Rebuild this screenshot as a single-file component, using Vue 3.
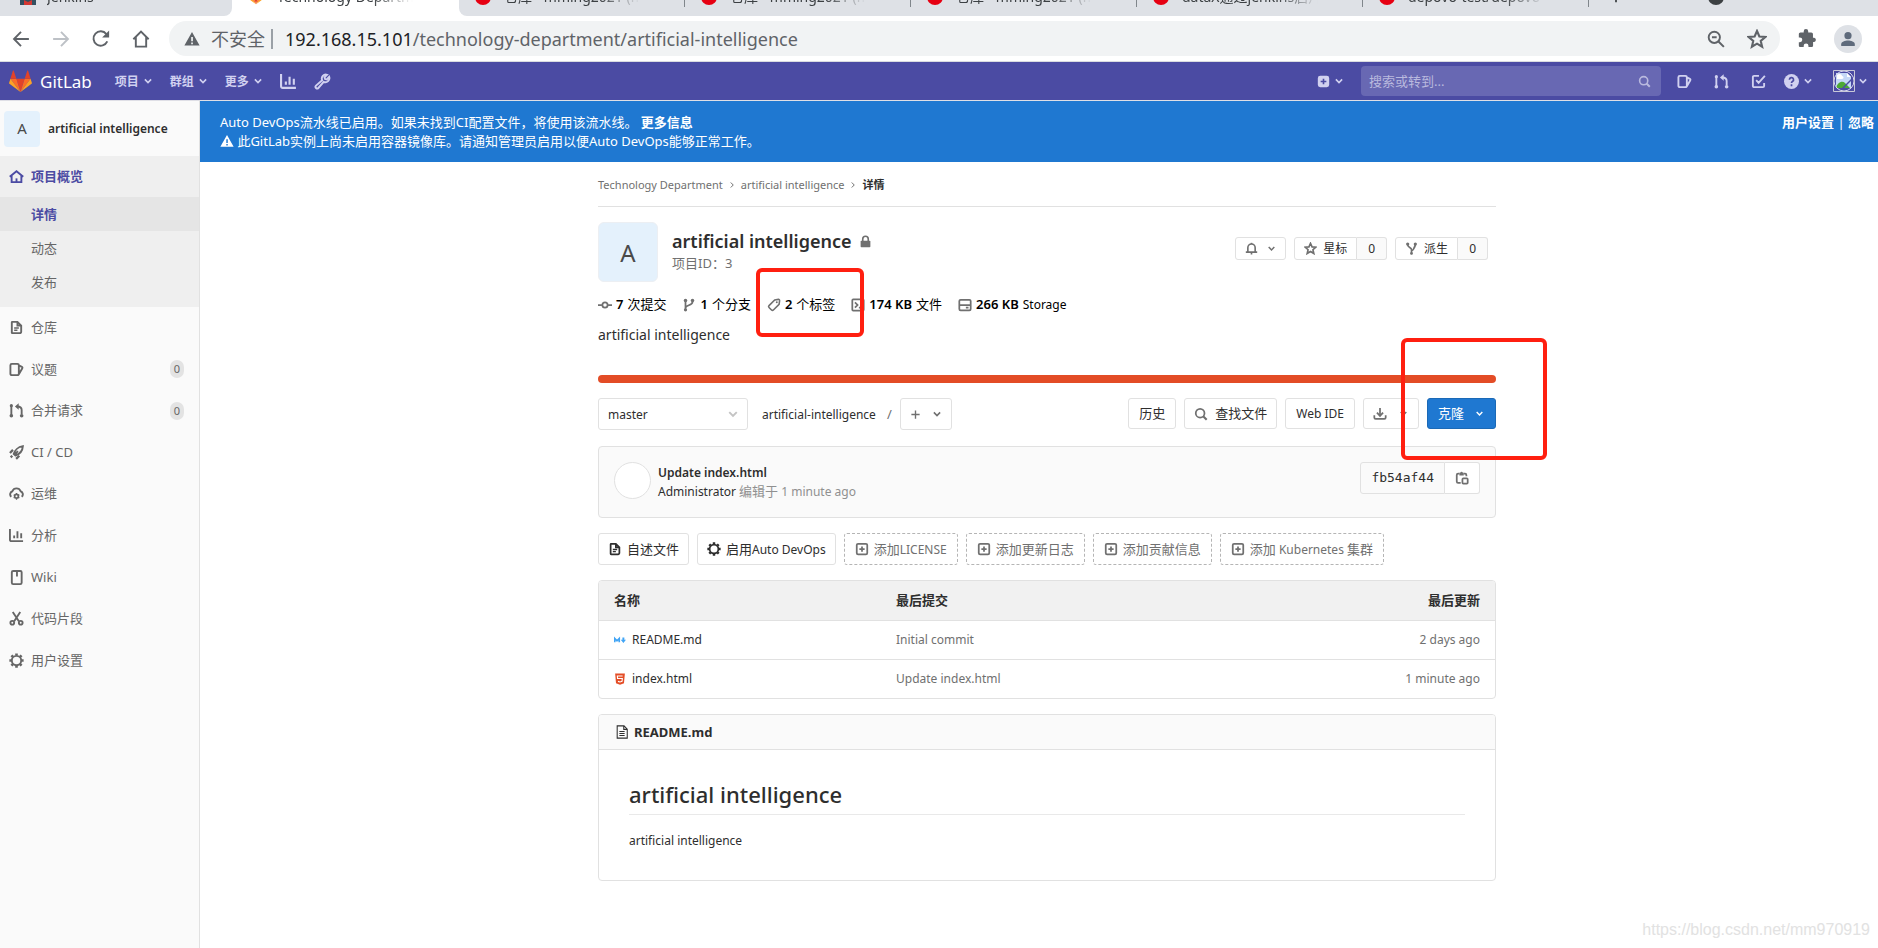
<script setup>
import { ref, h } from 'vue'

const glyphs = {
  back: '<path d="M15 8H2M8 1.6 1.8 8 8 14.4"/>',
  forward: '<path d="M1 8h13M8 1.6 14.2 8 8 14.4"/>',
  reload: '<path d="M13.6 10.2A6.4 6.4 0 1 1 12.8 3.6"/><path d="M15.2.4v6.2H9z" fill="currentColor" stroke="none"/>',
  house: '<path d="M1.2 8.2 8 1.5l6.800 6.700M3.400 6.500V14.800h9.200V6.500"/>',
  warning: '<path fill="currentColor" stroke="none" fill-rule="evenodd" d="M8 1 .4 14.600h15.200zM7.200 6h1.700v4.200H7.200zm0 5.500h1.700v1.700H7.200z"/>',
  zoomOut: '<circle cx="6.500" cy="6.500" r="5"/><path d="M10.200 10.200 15 15M4.400 6.500h4.200" stroke-width="1.800"/>',
  starOutline: '<path d="M8 1.600 9.900 6l4.700.4-3.600 3.100 1.100 4.700L8 11.700l-4.100 2.500L5 9.500 1.400 6.400 6.100 6z"/>',
  puzzle: '<path fill="currentColor" stroke="none" d="M13.600 7.300h-1V4.400c0-.8-.6-1.400-1.400-1.400H8.600V2a1.900 1.900 0 0 0-3.800 0v1H2.100C1.300 3 .7 3.600.7 4.400v2.700h.9a2 2 0 0 1 0 4H.7v2.700c0 .8.6 1.400 1.400 1.400h2.700v-1a2 2 0 0 1 4 0v1h2.500c.8 0 1.400-.6 1.400-1.400V11h.9a1.900 1.900 0 0 0 0-3.700z"/>',
  person: '<circle cx="8" cy="4.700" r="3.600" fill="currentColor" stroke="none"/><path fill="currentColor" stroke="none" d="M1.200 15v-1.800C1.200 10.700 5 9.500 8 9.500s6.800 1.200 6.800 3.700V15z"/>',
  chevron: '<path d="m3 5.500 5 5 5-5" stroke-width="2.600"/>',
  right: '<path d="m5.500 3 5 5-5 5" stroke-width="2"/>',
  chart: '<path d="M1 1v11.500A1.500 1.500 0 0 0 2.500 14H15M5.500 8v3M9 3.500V11M13 5.500V11"/>',
  wrench: '<path d="M14.300 3.600a3.800 3.800 0 0 1-5.200 4.700l-5 5.800a1.500 1.500 0 0 1-2.200-2.200l5.800-5A3.800 3.800 0 0 1 12.300 1.700L9.900 4.100l.5 1.600 1.600.4z" stroke-width="1.800"/>',
  plusSquare: '<path fill="currentColor" stroke="none" fill-rule="evenodd" d="M4 1h8a3 3 0 0 1 3 3v8a3 3 0 0 1-3 3H4a3 3 0 0 1-3-3V4a3 3 0 0 1 3-3zm3 3.500V7H4.500v2H7v2.500h2V9h2.500V7H9V4.500z"/>',
  plusBox: '<rect x="2" y="2" width="12" height="12" rx="1.500"/><path d="M8 5v6M5 8h6"/>',
  plus: '<path d="M8 2v12M2 8h12"/>',
  search: '<circle cx="7" cy="7" r="5"/><path d="m10.500 10.500 4 4" stroke-width="2.400"/>',
  issues: '<path d="M3 2h6a1.500 1.500 0 0 1 1.500 1.500v9A1.500 1.500 0 0 1 9 14H3a1.500 1.500 0 0 1-1.500-1.500v-9A1.500 1.500 0 0 1 3 2zM10.500 3.600l3.200 1.600c.6.300.8.800.5 1.400L10.500 13"/>',
  merge: '<path d="M2.500 4v9M13.500 12V7.500c0-2.500-1.500-3.800-4.500-3.800"/><path fill="currentColor" stroke="none" d="M10.300.3v6.800L6.300 3.700z"/><circle cx="2.500" cy="2.800" r="1.700" fill="currentColor" stroke="none"/><circle cx="2.500" cy="13.500" r="1.900" fill="currentColor" stroke="none"/><circle cx="13.500" cy="13.500" r="1.900" fill="currentColor" stroke="none"/>',
  todo: '<path d="M8.500 2H3.300A1.300 1.300 0 0 0 2 3.300v9.400A1.300 1.300 0 0 0 3.300 14h9.400a1.300 1.300 0 0 0 1.300-1.300V9.500M5.500 6.500l2.600 3L14.800 2"/>',
  help: '<path fill="currentColor" stroke="none" d="M8 0a8 8 0 1 0 0 16A8 8 0 0 0 8 0z"/><path d="M5.800 6.200A2.200 2.200 0 1 1 9 8c-.7.400-1 .7-1 1.500M8 11v2" stroke="#4b4ba3" stroke-width="1.800"/>',
  home: '<path d="M.8 8.200 8 2.300l7.200 5.900M2.800 7v7h10.400V7"/><path d="M8 10v4"/>',
  doc: '<path d="M3.500 2H9l4 4v6.500A1.500 1.500 0 0 1 11.500 14h-8A.5.500 0 0 1 3 13.500v-11A.5.500 0 0 1 3.500 2zM9 2v4h4"/><path d="M5.500 8.500h5M5.500 11H9" stroke-width="1.600"/>',
  rocket: '<path d="M5 9.500C6 6 9.500 2 14.800 1.200 14.500 6.500 10.500 10 6.800 11.200zM5.500 10.800 9.500 6.500"/><path d="M4.200 5.200 1 8.500M11 11.500 7.600 14.800M3.500 11.500l-1.700 1.700" stroke-width="2.400"/>',
  cloud: '<path d="M2.500 11.500A3.400 3.400 0 0 1 3.600 5.600a4.700 4.700 0 0 1 8.800 0 3.400 3.400 0 0 1 1.100 5.900"/><circle cx="8" cy="11" r="2" stroke-width="1.800"/><path d="M8 7.500v1.200M8 13.300v1.300M5 9.300l1 .6M10 12.200l1 .6M5 12.800l1-.6M10 9.800l1-.6" stroke-width="1.400"/>',
  book: '<rect x="3" y="1" width="10.500" height="14" rx="1.500"/><path d="M8.500 1.500v5.300"/>',
  scissors: '<path d="m4 1 6.500 10M12 1 5.500 11"/><circle cx="3.500" cy="12.500" r="2"/><circle cx="12.500" cy="12.500" r="2"/>',
  gear: '<circle cx="8" cy="8" r="5"/><path d="M8 .4v2.200M8 13.400v2.200M.4 8h2.200M13.400 8h2.200M2.600 2.600l1.600 1.600M11.800 11.800l1.600 1.600M2.600 13.400l1.600-1.600M11.800 4.200l1.600-1.600" stroke-width="2.800"/>',
  lock: '<path fill="currentColor" stroke="none" d="M3 7h10a1 1 0 0 1 1 1v6a1 1 0 0 1-1 1H3a1 1 0 0 1-1-1V8a1 1 0 0 1 1-1z"/><path d="M4.600 8V5a3.400 3.400 0 0 1 6.800 0v3"/>',
  commit: '<circle cx="8" cy="8" r="3"/><path d="M0 8h4.500M11.500 8H16"/>',
  branch: '<path d="M4 3.500V14.500M12 4v.5c0 4-8 3.500-8 7"/><circle cx="4" cy="2.800" r="2" fill="currentColor" stroke="none"/><circle cx="12" cy="2.800" r="2" fill="currentColor" stroke="none"/><circle cx="4" cy="13.500" r="1.800" fill="currentColor" stroke="none"/>',
  tag: '<path d="M8.800 2.200 13 1.600c.9-.1 1.500.5 1.400 1.400l-.6 4.200-6.500 6.500a1.500 1.500 0 0 1-2.100 0L2.300 10.800a1.500 1.500 0 0 1 0-2.100z" stroke-width="1.800"/><circle cx="11.200" cy="4.800" r="1.100" fill="currentColor" stroke="none"/>',
  snippet: '<rect x="1.500" y="1.500" width="13" height="13" rx="1"/><path d="m4.500 5 3 3-3 3M9 11h3"/>',
  disk: '<rect x="1.500" y="2" width="13" height="12" rx="1.500" stroke-width="2"/><path d="M2 8h12M9 11h3" stroke-width="2"/>',
  bell: '<path d="M3.500 12V7a4.500 4.500 0 0 1 9 0v5M1 12.500h14M7 14.500h2" /><path d="M8 1v1.500"/>',
  fork: '<path d="M3.300 3.500C3.300 7 8 6.500 8 9.500s4.700-2.500 4.700-6M8 9v6"/><circle cx="3.300" cy="2.600" r="2" fill="currentColor" stroke="none"/><circle cx="12.700" cy="2.600" r="2" fill="currentColor" stroke="none"/><circle cx="8" cy="14" r="1.600" fill="currentColor" stroke="none"/>',
  download: '<path d="M8 1v8M1.500 9.500V12A1.500 1.500 0 0 0 3 13.500h10a1.500 1.500 0 0 0 1.500-1.500V9.500"/><path d="m4.500 6.500 3.500 3.700 3.500-3.700"/>',
  paste: '<path d="M6.500 13.500h-3A1.500 1.500 0 0 1 2 12V4.500A1.500 1.500 0 0 1 3.500 3H5m5 0h1.500A1.500 1.500 0 0 1 13 4.500V6"/><path fill="currentColor" stroke="none" d="M5 2h1a1.600 1.600 0 0 1 3 0h1v3H5z"/><rect x="8.500" y="8.500" width="6" height="6" rx="1"/>',
  page: '<path d="M2.500 1h7.800L14 4.700V15H2.500zM10 1v4h4" stroke-width="1.200"/><path d="M5 7.500h6M5 9.800h6M5 12.100h6" stroke-width="1.200"/>',
  markdown: '<path d="M1 11V6l3 3 3-3v5" stroke-width="2.200"/><path fill="currentColor" stroke="none" d="M11.200 4.500h2.600v3.200H16l-3.500 4.200L9 7.700h2.200z"/>',
  html: '<path fill="#e44d26" stroke="none" d="M1.500.5h13l-1.200 13.200L8 15.500l-5.300-1.800z"/><path d="M11.500 4h-7l.3 3.400h6.300l-.4 3.800-2.700.8-2.700-.8" stroke="#fff" stroke-width="1.500"/>',
  tanuki: '<path fill="#e24329" stroke="none" d="M8 15.300 10.900 6H5.100z"/><path fill="#fc6d26" stroke="none" d="M8 15.300 5.100 6H1zM8 15.300 10.900 6H15z"/><path fill="#fca326" stroke="none" d="M1 6 .1 8.900a.6.600 0 0 0 .2.700L8 15.300zM15 6l.9 2.900a.6.600 0 0 1-.2.700L8 15.300z"/><path fill="#e24329" stroke="none" d="M1 6h4.100L3.300.6c-.1-.3-.5-.3-.6 0zM15 6h-4.100L12.700.6c.1-.3.5-.3.600 0z"/>'
}

const Icon = (props) =>
  h('svg', {
    viewBox: '0 0 16 16',
    width: props.size,
    height: props.size,
    fill: 'none',
    stroke: 'currentColor',
    'stroke-width': 2,
    'aria-hidden': 'true',
    innerHTML: glyphs[props.name]
  })
Icon.props = { name: String, size: { type: Number, default: 15 } }

const otherTabs = [
  '仓库 - mming2021 (mmi',
  '仓库 - mming2021 (mmi',
  '仓库 - mming2021 (mmi',
  'dataX通过jenkins启片库',
  'depovo-test/depovo-te'
]
const topMenus = ['项目', '群组', '更多']
const overviewLinks = ['详情', '动态', '发布']
const sideLinks = [
  { icon: 'doc', label: '仓库' },
  { icon: 'issues', label: '议题', count: 0 },
  { icon: 'merge', label: '合并请求', count: 0 },
  { icon: 'rocket', label: 'CI / CD' },
  { icon: 'cloud', label: '运维' },
  { icon: 'chart', label: '分析' },
  { icon: 'book', label: 'Wiki' },
  { icon: 'scissors', label: '代码片段' },
  { icon: 'gear', label: '用户设置' }
]
const stats = [
  { icon: 'commit', value: '7', unit: '次提交' },
  { icon: 'branch', value: '1', unit: '个分支' },
  { icon: 'tag', value: '2', unit: '个标签', marked: true },
  { icon: 'snippet', value: '174 KB', unit: '文件' },
  { icon: 'disk', value: '266 KB', unit: 'Storage', latin: true }
]
const quickLinks = [
  { icon: 'doc', kind: 'strong', parts: ['自述文件'] },
  { icon: 'gear', kind: 'strong', parts: ['启用', 'Auto DevOps'] },
  { icon: 'plusBox', kind: 'dashed', parts: ['添加', 'LICENSE'] },
  { icon: 'plusBox', kind: 'dashed', parts: ['添加更新日志'] },
  { icon: 'plusBox', kind: 'dashed', parts: ['添加贡献信息'] },
  { icon: 'plusBox', kind: 'dashed', parts: ['添加', ' Kubernetes ', '集群'] }
]
const files = [
  { icon: 'markdown', name: 'README.md', commit: 'Initial commit', time: '2 days ago' },
  { icon: 'html', name: 'index.html', commit: 'Update index.html', time: '1 minute ago' }
]
const branch = ref('master')
const keyword = ref('')
const address = ref('192.168.15.101')
</script>

<template>
  <div class="window">
    <div class="tabs">
      <div class="tab tab-first">
        <svg class="favicon" viewBox="0 0 16 16" aria-hidden="true">
          <path fill="#335061" d="M0 16V9l4-3h8l4 4v6z" />
          <path fill="#d33833" d="M4 11l4 2 4-2v5H4z" />
          <circle cx="8" cy="6" r="5" fill="#f0d6b7" />
        </svg>
        <span class="tab-title">Jenkins</span>
      </div>
      <div class="tab tab-active">
        <Icon class="favicon" name="tanuki" :size="16" />
        <span class="tab-title">Technology Department</span>
      </div>
      <div class="tab-rest">
        <div v-for="(title, i) in otherTabs" :key="i" class="tab">
          <svg class="favicon" viewBox="0 0 16 16" aria-hidden="true">
            <circle cx="8" cy="8" r="8" fill="#e60012" />
            <path d="M4 10h8" stroke="#fff" stroke-width="1" />
          </svg>
          <span class="tab-title">{{ title }}</span>
        </div>
        <div class="tab-tools">
          <Icon name="plus" :size="14" />
          <span class="tab-dot"></span>
        </div>
      </div>
    </div>

    <div class="toolbar">
      <button class="tool" aria-label="返回"><Icon name="back" :size="18" /></button>
      <button class="tool muted" aria-label="前进"><Icon name="forward" :size="18" /></button>
      <button class="tool" aria-label="刷新"><Icon name="reload" :size="18" /></button>
      <button class="tool" aria-label="主页"><Icon name="house" :size="18" /></button>
      <div class="address">
        <Icon name="warning" :size="16" />
        <span class="insecure">不安全</span>
        <span class="url"><b>{{ address }}</b>/technology-department/artificial-intelligence</span>
        <button class="tool" aria-label="缩小"><Icon name="zoomOut" :size="18" /></button>
        <button class="tool" aria-label="收藏"><Icon name="starOutline" :size="20" /></button>
      </div>
      <button class="tool" aria-label="扩展程序"><Icon name="puzzle" :size="19" /></button>
      <button class="tool profile" aria-label="用户"><Icon name="person" :size="16" /></button>
    </div>

    <header class="navbar">
      <a class="brand" href="#"><Icon name="tanuki" :size="23" />GitLab</a>
      <nav class="menus">
        <a v-for="m in topMenus" :key="m" href="#">{{ m }}<Icon name="chevron" :size="10" /></a>
        <a href="#" aria-label="统计"><Icon name="chart" :size="17" /></a>
        <a href="#" aria-label="管理"><Icon name="wrench" :size="17" /></a>
      </nav>
      <div class="nav-right">
        <a class="nav-plus" href="#" aria-label="新建"><Icon name="plusSquare" :size="13" /><Icon name="chevron" :size="10" /></a>
        <label class="search">
          <input v-model="keyword" type="text" placeholder="搜索或转到..." aria-label="搜索或转到" />
          <Icon name="search" :size="13" />
        </label>
        <div class="nav-icons">
          <a href="#" aria-label="议题"><Icon name="issues" :size="15" /></a>
          <a href="#" aria-label="合并请求"><Icon name="merge" :size="15" /></a>
          <a href="#" aria-label="待办"><Icon name="todo" :size="15" /></a>
        </div>
        <a class="nav-help" href="#" aria-label="帮助"><Icon name="help" :size="15" /><Icon name="chevron" :size="10" /></a>
        <a class="nav-user" href="#" aria-label="用户菜单">
          <svg class="avatar-broken" viewBox="0 0 22 22" aria-hidden="true">
            <path d="M3 3h11l4 4v11H3z" fill="#c5d8f7" />
            <path d="M4 5c2-2 5-1 5 1 2 0 2 3 0 3H4z" fill="#fff" />
            <path d="M3 18c1-5 6-8 9-5l5 5z" fill="#4ca835" />
            <path d="M9 18 18 9v2l-7 7z" fill="#4b4ba3" />
            <path d="M14 3v4h4z" fill="#fff" />
            <circle cx="11" cy="11" r="10" fill="none" stroke="#d9d9ef" stroke-width="1" />
            <path d="M.5.500h21v21H.5z" fill="none" stroke="#c8c8d8" />
          </svg>
          <Icon name="chevron" :size="10" />
        </a>
      </div>
    </header>

    <div class="body">
      <aside class="sidebar">
        <a class="context" href="#"><span class="letter">A</span>artificial intelligence</a>
        <div class="overview">
          <a class="side-link current" href="#"><Icon name="home" /><span>项目概览</span></a>
          <a v-for="(l, i) in overviewLinks" :key="l" :class="['sub-link', { selected: i === 0 }]" href="#">{{ l }}</a>
        </div>
        <nav class="side-list">
          <a v-for="l in sideLinks" :key="l.label" class="side-link" href="#">
            <Icon :name="l.icon" /><span>{{ l.label }}</span>
            <span v-if="l.count !== undefined" class="count">{{ l.count }}</span>
          </a>
        </nav>
      </aside>

      <main class="main">
        <div class="banner">
          <div>
            <p>Auto DevOps流水线已启用。如果未找到CI配置文件，将使用该流水线。 <a href="#">更多信息</a></p>
            <p><Icon name="warning" :size="14" /> 此GitLab实例上尚未启用容器镜像库。请通知管理员启用以便Auto DevOps能够正常工作。</p>
          </div>
          <p class="banner-links"><a href="#">用户设置</a> | <a href="#">忽略</a></p>
        </div>

        <div class="content">
          <nav class="crumbs">
            <a href="#">Technology Department</a><Icon name="right" :size="8" />
            <a href="#">artificial intelligence</a><Icon name="right" :size="8" />
            <a class="here" href="#">详情</a>
          </nav>

          <section class="project">
            <span class="letter big">A</span>
            <div class="project-name">
              <h1>artificial intelligence <Icon name="lock" :size="13" /></h1>
              <p>项目ID：3</p>
            </div>
            <div class="project-actions">
              <button class="btn small" aria-label="通知"><Icon name="bell" :size="13" /><Icon name="chevron" :size="9" /></button>
              <div class="pair"><button class="btn small"><Icon name="starOutline" :size="13" />星标</button><a class="btn small num" href="#">0</a></div>
              <div class="pair"><button class="btn small"><Icon name="fork" :size="13" />派生</button><a class="btn small num" href="#">0</a></div>
            </div>
          </section>

          <div class="stats">
            <a v-for="s in stats" :key="s.unit" class="stat" href="#">
              <Icon :name="s.icon" :size="14" /><b>{{ s.value }}</b><span :class="{ latin: s.latin }">{{ s.unit }}</span>
              <i v-if="s.marked" class="mark mark-tags"></i>
            </a>
          </div>
          <p class="description">artificial intelligence</p>
          <div class="language"></div>

          <div class="tree-bar">
            <label class="ref">
              <select v-model="branch" aria-label="分支"><option>master</option></select>
              <Icon name="chevron" :size="12" />
            </label>
            <a class="path" href="#">artificial-intelligence</a>
            <span class="slash">/</span>
            <button class="btn add" aria-label="添加"><Icon name="plus" :size="11" /><Icon name="chevron" :size="10" /></button>
            <div class="tree-actions">
              <a class="btn" href="#">历史</a>
              <a class="btn find" href="#"><Icon name="search" :size="14" />查找文件</a>
              <a class="btn latin" href="#">Web IDE</a>
              <button class="btn download" aria-label="下载"><Icon name="download" :size="14" /><Icon name="chevron" :size="9" /></button>
              <div class="clone">
                <button class="btn primary">克隆<Icon name="chevron" :size="9" /></button>
                <i class="mark mark-clone"></i>
              </div>
            </div>
          </div>

          <section class="commit">
            <span class="face"></span>
            <div class="commit-text">
              <a class="commit-title" href="#">Update index.html</a>
              <p><a href="#">Administrator</a> <span class="han">编辑于</span> 1 minute ago</p>
            </div>
            <div class="pair">
              <span class="sha">fb54af44</span>
              <button class="btn copy" aria-label="复制提交SHA"><Icon name="paste" :size="14" /></button>
            </div>
          </section>

          <div class="quick">
            <a v-for="q in quickLinks" :key="q.parts.join('')" class="btn" :class="q.kind" href="#">
              <Icon :name="q.icon" :size="14" />
              <span><span v-for="(p, i) in q.parts" :key="i" :class="{ latin: i === 1 }">{{ p }}</span></span>
            </a>
          </div>

          <div class="panel">
            <table>
              <thead><tr><th>名称</th><th>最后提交</th><th>最后更新</th></tr></thead>
              <tbody>
                <tr v-for="f in files" :key="f.name">
                  <td><a class="file" :class="f.icon" href="#"><Icon :name="f.icon" :size="12" /><span>{{ f.name }}</span></a></td>
                  <td>{{ f.commit }}</td>
                  <td>{{ f.time }}</td>
                </tr>
              </tbody>
            </table>
          </div>

          <article class="panel readme">
            <header><Icon name="page" :size="14" /><b>README.md</b></header>
            <div class="prose">
              <h2>artificial intelligence</h2>
              <p>artificial intelligence</p>
            </div>
          </article>
        </div>
      </main>
    </div>
    <div class="watermark">https://blog.csdn.net/mm970919</div>
  </div>
</template>

<style>
body { margin: 0; }
</style>

<style scoped>
.window {
  position: relative;
  display: flex;
  flex-direction: column;
  min-height: 100vh;
  overflow: hidden;
  background: #fff;
  color: #2e2e2e;
  font-family: "Noto Sans", "Noto Sans CJK SC", sans-serif;
  font-size: 13px;
  line-height: 19px;
}
* { box-sizing: border-box; }
a { color: inherit; text-decoration: none; }
p, h1, h2 { margin: 0; }
svg { flex: none; }
button, input, select { font: inherit; color: inherit; }
button { cursor: pointer; }
.latin { font-size: 12px; white-space: pre; }
.han { font-size: 13px; }

/* browser tabs */
.tabs { display: flex; height: 16px; overflow: hidden; align-items: flex-end; font-size: 14px; color: #3c4043; }
.tab { display: flex; align-items: center; gap: 13px; width: 226px; height: 39px; padding: 0 16px; flex: none; background: #dee1e6; }
.tab-first { gap: 11px; width: 232px; padding-left: 20px; border-radius: 0 0 8px 0; }
.tab-active { width: 227px; background: #fff; }
.tab-rest { display: flex; flex: 1; background: #dee1e6; border-radius: 0 0 0 8px; overflow: hidden; }
.tab-rest .tab { background: linear-gradient(#80868b, #80868b) right 0 top 10px / 1px 20px no-repeat; }
.favicon { width: 16px; height: 16px; }
.tab-title { flex: 1; overflow: hidden; white-space: nowrap; max-width: 136px; mask-image: linear-gradient(90deg, #000 70%, transparent); }
.tab-tools { display: flex; align-items: center; height: 39px; gap: 85px; padding-left: 20px; }
.tab-dot { width: 16px; height: 16px; border-radius: 50%; background: #3c4043; }

/* browser toolbar */
.toolbar { display: flex; align-items: center; height: 46px; padding: 0 16px 0 12px; border-bottom: 1px solid #dadce0; color: #5f6368; }
.tool { display: flex; align-items: center; justify-content: center; width: 18px; height: 18px; margin-right: 22px; padding: 0; border: 0; background: none; }
.tool svg { stroke-width: 1.700; }
.muted { color: #bdc1c6; }
.address { display: flex; align-items: center; flex: 1; height: 35px; margin: 0 18px 0 -3px; padding-left: 15px; border-radius: 18px; background: #f1f3f4; font-size: 18px; line-height: 22px; }
.address .tool:last-child { width: 20px; margin-right: 13px; }
.insecure { margin: 0 6px 0 11px; }
.url { flex: 1; padding-left: 12px; border-left: 2px solid #9aa0a6; line-height: 20px; white-space: nowrap; }
.url b { font-weight: 400; color: #202124; }
.toolbar > .tool:nth-last-child(2) { margin-right: 18px; }
.toolbar > .profile { width: 28px; height: 28px; margin-right: 0; border-radius: 50%; background: #dee1e6; color: #5f6b7c; }

/* GitLab navbar */
.navbar { display: flex; align-items: center; height: 39px; padding: 0 10px 0 9px; background: #4b4ba3; border-bottom: 1px solid #dfdfe6; color: #d1d1f0; }
.brand { display: flex; align-items: center; gap: 8px; color: #fff; font-size: 17px; }
.menus { display: flex; align-items: center; gap: 17px; margin-left: 23px; font-size: 12px; font-weight: 600; }
.menus a { display: flex; align-items: center; gap: 4px; }
.nav-right { display: flex; align-items: center; margin-left: auto; }
.nav-right a { display: flex; align-items: center; }
.nav-plus { gap: 4px; }
.search { display: flex; align-items: center; width: 300px; height: 30px; margin: 0 16px 0 17px; padding: 0 10px 0 8px; border-radius: 4px; background: #6868b3; color: #b9b9de; }
.search input { flex: 1; min-width: 0; padding: 0; border: 0; outline: 0; background: none; }
.search input::placeholder { color: #b9b9de; opacity: 1; }
.nav-icons { display: flex; gap: 22px; }
.nav-help { gap: 4px; margin: 0 20px 0 18px; }
.nav-user { gap: 3px; }
.avatar-broken { width: 22px; height: 22px; }

.body { display: flex; flex: 1; }

/* sidebar */
.sidebar { width: 200px; flex: none; border-right: 1px solid #e1e1e1; background: #fafafa; color: #666; }
.context { display: flex; align-items: center; gap: 8px; height: 55px; padding-left: 4px; color: #2e2e2e; font-size: 12px; font-weight: 600; }
.letter { display: flex; align-items: center; justify-content: center; width: 36px; height: 36px; border-radius: 4px; background: #e4f1fc; color: #4a4a4a; font-size: 15px; font-weight: 400; }
.overview { padding-bottom: 8px; background: #efefef; }
.side-link { display: flex; align-items: center; gap: 7px; height: 41px; padding: 0 15px 0 9px; }
.current, .selected { color: #4b4ba3; font-weight: 600; }
.sub-link { display: block; padding-left: 31px; line-height: 34px; }
.selected { background: #e5e5e5; }
.side-list { display: grid; grid-auto-rows: 1fr; min-height: 374px; }
.side-list .side-link { height: auto; }
.count { margin-left: auto; padding: 0 4px; border-radius: 10px; background: #e3e3e3; font-size: 11px; line-height: 18px; }

/* main column */
.main { display: flex; flex: 1; flex-direction: column; min-width: 0; }
.banner { display: flex; justify-content: space-between; padding: 12px 4px 11px 20px; background: #1f78d1; color: #fff; }
.banner a { font-weight: 600; }
.banner svg { vertical-align: -2px; }
.content { box-sizing: content-box; width: 898px; max-width: 100%; margin: 0 auto; padding: 13px 0 0 16px; }

.crumbs { display: flex; align-items: center; gap: 5px; padding-bottom: 12px; border-bottom: 1px solid #e1e1e1; color: #707070; font-size: 11px; }
.here { color: #2e2e2e; font-weight: 600; }

.project { display: flex; align-items: center; gap: 14px; padding-top: 15px; }
.big { width: 60px; height: 60px; font-size: 24px; border-radius: 6px; border: 1px solid #eceff3; }
.project-name { padding-bottom: 4px; color: #707070; }
.project-name h1 { color: #2e2e2e; font-size: 18px; line-height: 26px; font-weight: 600; }
.project-name h1 svg { margin-left: 3px; color: #707070; }
.project-actions { display: flex; gap: 8px; margin: 0 8px 8px auto; }

.btn { display: flex; align-items: center; justify-content: center; gap: 8px; height: 32px; padding: 0 10px; border: 1px solid #e1e1e1; border-radius: 3px; background: #fff; color: #2e2e2e; white-space: nowrap; }
.btn svg { color: #707070; }
.small { height: 23px; gap: 6px; font-size: 12px; padding: 0 9px; }
.small svg + svg { margin-left: 3px; }
.num { background: #fafafa; padding: 0 11px; }
.pair { display: flex; }
.pair > :first-child { border-radius: 3px 0 0 3px; }
.pair > :last-child { border-left: 0; border-radius: 0 3px 3px 0; }

.stats { display: flex; gap: 16px; margin-top: 13px; color: #000; }
.stat { position: relative; display: flex; align-items: center; gap: 4px; }
.stat svg { color: #707070; }
.stat b { font-weight: 600; }
.description { margin-top: 11px; font-size: 14px; }
.language { height: 8px; margin: 31px 0 15px; border-radius: 4px; background: #e34c26; }

.tree-bar { display: flex; align-items: center; }
.ref { position: relative; display: flex; align-items: center; width: 150px; height: 32px; border: 1px solid #e1e1e1; border-radius: 3px; color: #c4c4c4; }
.ref select { width: 100%; height: 100%; padding: 0 9px; border: 0; border-radius: 3px; outline: 0; appearance: none; background: none; color: #2e2e2e; font-size: 12px; }
.ref svg { position: absolute; right: 8px; pointer-events: none; }
.path { margin: 0 11px 0 14px; font-size: 12px; }
.slash { margin-right: 8px; color: #707070; }
.add { gap: 11px; padding: 0 10px; width: 52px; }
.tree-actions { display: flex; align-self: flex-start; gap: 8px; margin-left: auto; }
.tree-actions .btn { height: 31px; }
.find { gap: 7px; padding: 0 9px; }
.tree-actions .download { gap: 12px; width: 56px; }
.clone { position: relative; }
.primary { gap: 11px; padding: 0 11px 0 10px; border-color: #1b69b6; background: #1f78d1; color: #fff; }
.primary svg { color: #fff; }

.mark { position: absolute; z-index: 2; border: 4px solid #ff1f10; border-radius: 6px; pointer-events: none; }
.mark-tags { top: -27px; left: -11px; width: 108px; height: 69px; }
.mark-clone { top: -60px; left: -26px; width: 146px; height: 122px; }

.commit { display: flex; align-items: flex-start; margin-top: 16px; padding: 15px; border: 1px solid #e1e1e1; border-radius: 4px; background: #fafafa; }
.face { width: 37px; height: 37px; border: 1px solid #e1e1e1; border-radius: 50%; background: #fff; }
.commit-text { margin: 1px auto 1px 7px; font-size: 12px; color: #909090; }
.commit-text a { color: #2e2e2e; }
.commit-text .commit-title { font-weight: 600; }
.sha { padding: 0 10px; border: 1px solid #e1e1e1; font-family: "DejaVu Sans Mono", monospace; font-size: 13px; line-height: 30px; }
.copy { width: 35px; }

.quick { display: flex; gap: 8px; margin: 15px 0; }
.quick .btn { gap: 5px; }
.quick .strong { padding: 0 9px; }
.strong svg { color: #2e2e2e; }
.dashed { border: 1px dashed #b5b5b5; color: #707070; }

.panel { border: 1px solid #e1e1e1; border-radius: 4px; overflow: hidden; }
table { width: 100%; border-collapse: collapse; table-layout: fixed; font-size: 12px; color: #707070; }
th, td { height: 39px; padding: 0 15px; text-align: left; }
th { height: 39px; background: #f1f1f1; color: #2e2e2e; font-size: 13px; font-weight: 600; }
tbody tr { border-top: 1px solid #e1e1e1; }
th:first-child { width: 282px; }
th:last-child { width: 200px; }
th:last-child, td:last-child { text-align: right; }
.file { display: flex; align-items: center; gap: 6px; color: #2e2e2e; }
.markdown svg { color: #42a5f5; }

.readme { margin: 15px 0 0; }
.readme header { display: flex; align-items: center; gap: 5px; height: 35px; padding: 0 16px; border-bottom: 1px solid #e1e1e1; background: #fafafa; }
.prose { padding: 29px 30px 30px; font-size: 12px; }
.prose h2 { padding-bottom: 4px; border-bottom: 1px solid #e9e9e9; font-size: 22px; line-height: 31px; font-weight: 500; }
.prose p { margin-top: 16px; }

.watermark { position: absolute; right: 8px; bottom: 9px; font-family: "Liberation Sans", Arial, sans-serif; font-size: 16px; color: #e2e2e2; }
</style>
